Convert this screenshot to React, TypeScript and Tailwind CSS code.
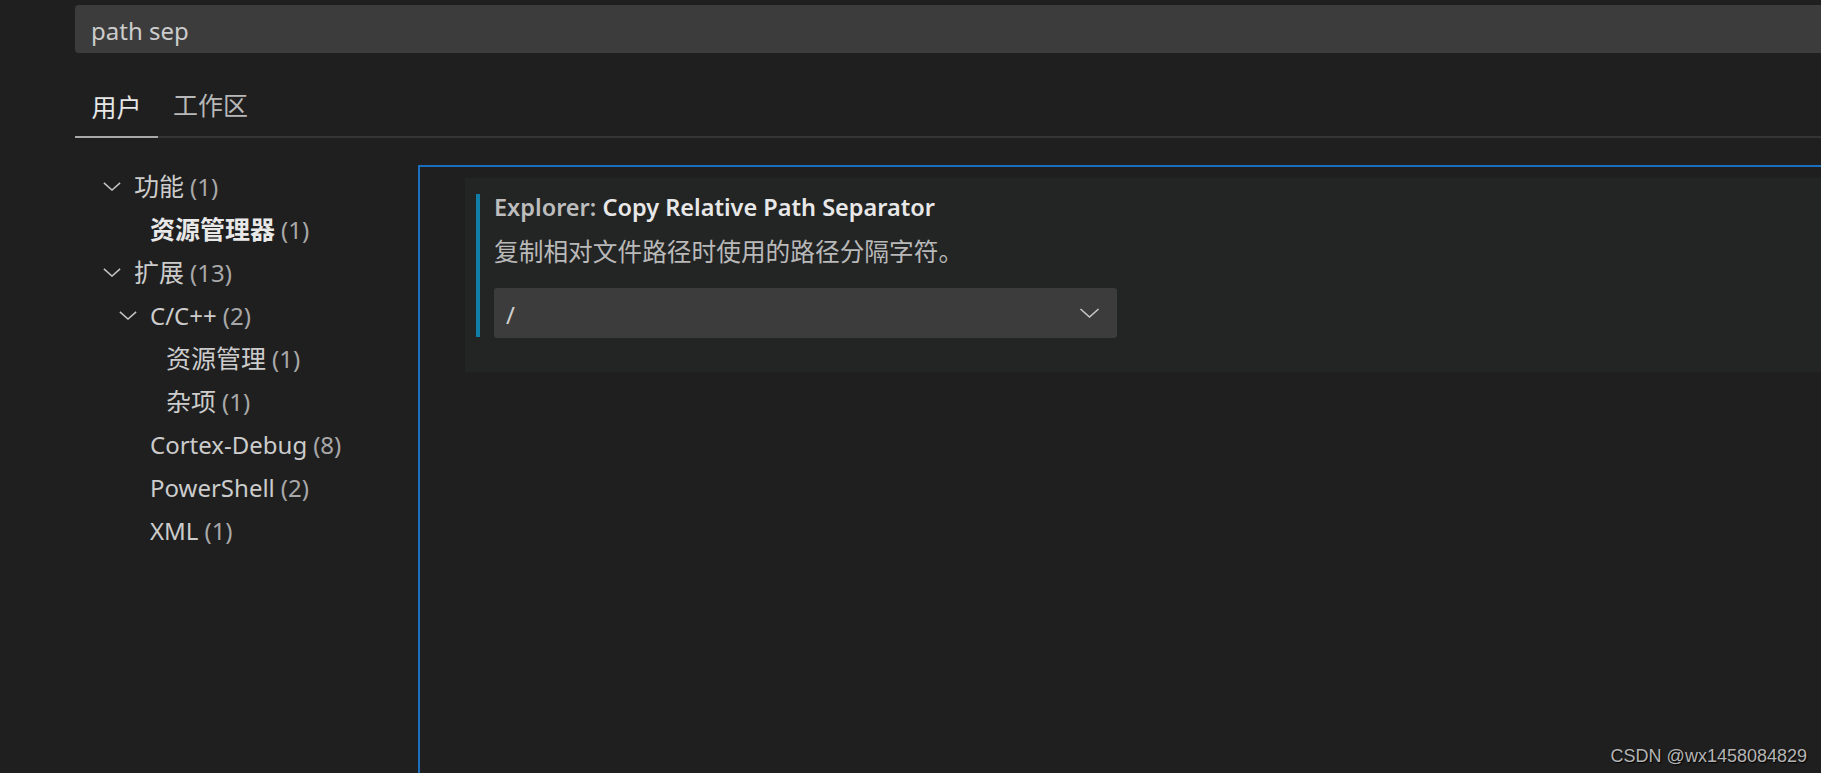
import React from "react";

const font = { fontFamily: '"Noto Sans", "Noto Sans CJK SC", sans-serif' };

type Row = {
  label: string;
  count: number;
  level: number;
  open?: boolean;
  bold?: boolean;
  cjk?: boolean;
};

const rows: Row[] = [
  { label: "功能", count: 1, level: 0, open: true, cjk: true },
  { label: "资源管理器", count: 1, level: 1, bold: true, cjk: true },
  { label: "扩展", count: 13, level: 0, open: true, cjk: true },
  { label: "C/C++", count: 2, level: 1, open: true },
  { label: "资源管理", count: 1, level: 2, cjk: true },
  { label: "杂项", count: 1, level: 2, cjk: true },
  { label: "Cortex-Debug", count: 8, level: 1 },
  { label: "PowerShell", count: 2, level: 1 },
  { label: "XML", count: 1, level: 1 },
];

function Chevron({ className }: { className?: string }) {
  return (
    <svg viewBox="0 0 20 10" className={className} fill="none">
      <polyline points="1,1 10,9 19,1" stroke="currentColor" strokeWidth="1.6" />
    </svg>
  );
}

function TreeRow({ row }: { row: Row }) {
  // chevron column is 31px, each level adds 16px
  const pad = ["pl-[28px]", "pl-[44px]", "pl-[60px]"][row.level];
  return (
    <div className={`flex h-[43px] items-center ${pad}`}>
      <div className="flex w-[31px] shrink-0 items-center">
        {row.open && <Chevron className="h-[9px] w-[18px] text-[#c5c5c5]" />}
      </div>
      <span
        className={
          (row.bold ? "font-bold text-[#e8e8e8]" : "text-[#cccccc]") +
          (row.cjk ? " text-[25px]" : "")
        }
      >
        {row.label}
      </span>
      <span className="ml-[6px] text-[#a8a8a8]">({row.count})</span>
    </div>
  );
}

export default function App() {
  return (
    <div
      className="relative h-[773px] w-[1821px] overflow-hidden bg-[#1f1f1f] text-[24px] leading-none"
      style={font}
    >
      <div className="pl-[75px] pt-[5px]">
        {/* search */}
        <div className="flex h-[48px] items-center rounded-l-[4px] bg-[#3c3c3c] pl-[16px] pt-[4px] text-[24px] text-[#cccccc]">
          path sep
        </div>

        {/* tabs */}
        <div className="flex h-[85px] items-end border-b-[2px] border-[#353535] text-[25px]">
          <div className="-mb-[2px] flex h-[55px] w-[83px] items-start justify-center border-b-[2px] border-[#a8a8a8] pt-[12px] text-[#e7e7e7]">
            用户
          </div>
          <div className="flex h-[55px] items-start pl-[15px] pt-[12px] text-[#b8b8b8]">
            工作区
          </div>
        </div>

        <div className="mt-[27px] flex">
          {/* tree */}
          <div className="w-[343px] shrink-0">
            {rows.map((r, i) => (
              <TreeRow key={i} row={r} />
            ))}
          </div>

          {/* settings panel */}
          <div className="h-[620px] flex-1 border-l-[2px] border-t-[2px] border-[#1b6fbf] pl-[45px] pt-[11px]">
            <div className="flex h-[194px] bg-[#232424] pl-[11px] pt-[16px]">
              <div className="h-[143px] w-[4px] bg-[#0f7fa8]" />
              <div className="pl-[14px]">
                <div className="flex h-[26px] items-center pt-[2px] text-[23.5px] font-semibold">
                  <span className="text-[#bdbdbd]">Explorer:&nbsp;</span>
                  <span className="text-[#e8e8e8]">Copy Relative Path Separator</span>
                </div>
                <div className="mt-[18px] flex h-[26px] items-center pt-[2px] text-[24.7px] text-[#b9b9b9]">
                  复制相对文件路径时使用的路径分隔字符。
                </div>
                <div className="mt-[24px] flex h-[50px] w-[623px] items-center justify-between rounded-[3px] bg-[#3c3c3c] pl-[12px] pr-[17px] text-[#d0d0d0]">
                  <span className="pt-[3px]">/</span>
                  <Chevron className="h-[10px] w-[21px] text-[#c5c5c5]" />
                </div>
              </div>
            </div>
          </div>
        </div>
      </div>

      <div
        className="absolute bottom-[8px] right-[14px] text-[18px] text-[#b4b4b4]"
        style={{ fontFamily: '"Liberation Sans", Arial, sans-serif', textShadow: "1px 1px 1px #000" }}
      >
        CSDN @wx1458084829
      </div>
    </div>
  );
}
